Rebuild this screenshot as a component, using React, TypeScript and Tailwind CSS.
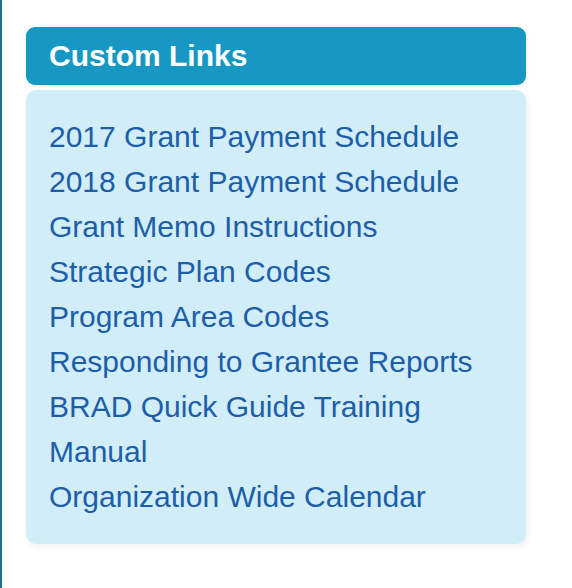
const links = [
  '2017 Grant Payment Schedule',
  '2018 Grant Payment Schedule',
  'Grant Memo Instructions',
  'Strategic Plan Codes',
  'Program Area Codes',
  'Responding to Grantee Reports',
  'BRAD Quick Guide Training Manual',
  'Organization Wide Calendar',
];

const App = () => {
  return (
    <div
      className="min-h-[588px] w-[572px] bg-white border-l-2 border-[#1b6f8c] pl-[24px] pt-[27px]"
      style={{ fontFamily: '"Liberation Sans", Arial, sans-serif' }}
    >
      <div className="w-[500px] flex flex-col gap-[5px]">
        <div className="h-[58px] rounded-[9px] bg-[#1698c3] flex items-center pl-[23px] shadow-[1px_1px_3px_rgba(0,0,0,0.08)]">
          <h2 className="text-[30px] font-bold text-white leading-none">Custom Links</h2>
        </div>
        <div className="rounded-[10px] bg-[#d1edf8] pl-[23px] pr-[10px] pt-[24px] pb-[25px] shadow-[2px_3px_6px_rgba(0,0,0,0.06)]">
          <ul className="flex flex-col">
            {links.map(link => (
              <li key={link} className="text-[30px] leading-[45px] text-[#1d5ea8]">
                <a href="#">{link}</a>
              </li>
            ))}
          </ul>
        </div>
      </div>
    </div>
  );
};

export default App;
